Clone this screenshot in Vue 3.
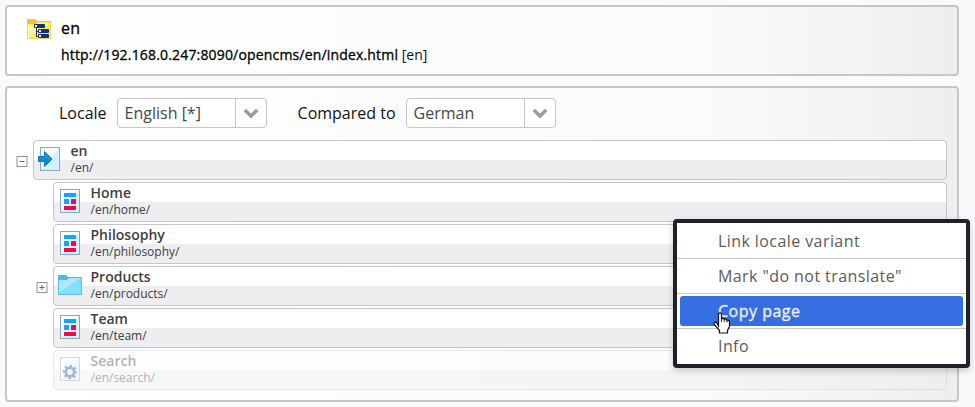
<script setup>
const rows = [
  { title: 'en', path: '/en/', icon: 'redirect', toggle: '-', root: true },
  { title: 'Home', path: '/en/home/', icon: 'page' },
  { title: 'Philosophy', path: '/en/philosophy/', icon: 'page' },
  { title: 'Products', path: '/en/products/', icon: 'folder', toggle: '+' },
  { title: 'Team', path: '/en/team/', icon: 'page' },
  { title: 'Search', path: '/en/search/', icon: 'gear', faded: true },
]
const locales = [
  { label: 'Locale', value: 'English [*]' },
  { label: 'Compared to', value: 'German' },
]
const menu = ['Link locale variant', 'Mark "do not translate"', 'Copy page', 'Info']
const active = 'Copy page'
</script>

<template>
  <main class="view">
    <section class="panel header">
      <svg class="site-icon" width="24" height="20" viewBox="0 0 24 20">
        <path d="M0 0H8L10 2H24V20H0Z" fill="#fbc02d" />
        <path d="M0 5H9L11 3H24V20H0Z" fill="#ffe45c" />
        <path d="M1 6H9L11 4H23L1 19Z" fill="#fff5a0" />
        <path d="M.5 5V19.5H23.5V3" fill="none" stroke="#f9d45c" />
        <path d="M9.500 8V17.500H13M9.500 12.500H13" fill="none" stroke="#0b2f7c" />
        <rect x="7" y="5" width="11" height="4" rx="1" fill="#0b3480" />
        <rect x="11" y="10" width="11" height="4" rx="1" fill="#0b3480" />
        <rect x="11" y="15" width="11" height="4" rx="1" fill="#0b3480" />
        <path d="M8 6h2v2H8zM12 11h2v2h-2zM12 16h2v2h-2z" fill="#fff5a0" />
      </svg>
      <div class="header-text">
        <div class="site-name">en</div>
        <div class="site-url"><span class="url">http://192.168.0.247:8090/opencms/en/index.html</span> <span class="tag">[en]</span></div>
      </div>
    </section>

    <section class="panel tree-panel">
      <div class="filters">
        <div v-for="l in locales" :key="l.label" class="filter">
          <span class="filter-label">{{ l.label }}</span>
          <div class="select">
            <span class="select-value">{{ l.value }}</span>
            <span class="select-button">
              <svg width="16" height="11" viewBox="0 0 16 11"><path d="M1.800 2L8 8L14.200 2" fill="none" stroke="#9c9c9c" stroke-width="3.600" /></svg>
            </span>
          </div>
        </div>
      </div>

      <div class="tree">
        <div v-for="r in rows" :key="r.path" class="row" :class="{ root: r.root, faded: r.faded }">
          <span class="toggle-slot">
            <svg v-if="r.toggle" width="12" height="11" viewBox="0 0 12 11">
              <rect x="1" y=".5" width="10" height="10" fill="#fff" stroke="#a08d85" />
              <path d="M3.500 5.500H8.500" stroke="#666" />
              <path v-if="r.toggle === '+'" d="M6 3V8" stroke="#666" />
            </svg>
          </span>
          <div class="card">
            <svg class="icon" width="24" height="24" viewBox="0 0 24 24">
              <defs>
                <linearGradient id="sheet" x1="0" y1="0" x2="1" y2="1">
                  <stop offset=".45" stop-color="#f4fcff" /><stop offset=".55" stop-color="#d5f1fd" />
                </linearGradient>
                <linearGradient id="arrow" x1="0" y1="0" x2="0" y2="1">
                  <stop offset="0" stop-color="#22a7e8" /><stop offset="1" stop-color="#0876bd" />
                </linearGradient>
              </defs>
              <template v-if="r.icon === 'folder'">
                <path d="M0 2H8L10 4H24V22H0Z" fill="#42bdea" />
                <path d="M1 7H8.500L11 5H23V21H1Z" fill="#83dffa" />
                <path d="M1 7H8.500L11 5H23L1 19Z" fill="#ade9fb" />
                <path d="M.5 7V21.500H23.500V4" fill="none" stroke="#55c5ed" />
              </template>
              <template v-else-if="r.icon === 'redirect'">
                <rect x="2.500" y=".5" width="19" height="23" fill="url(#sheet)" stroke="#86a9bb" />
                <path d="M.5 9.500H6.500V4.500L14 12L6.500 19.500V14.500H.5Z" fill="url(#arrow)" stroke="#087fc4" />
              </template>
              <template v-else>
                <rect x="2.500" y=".5" width="19" height="23" fill="url(#sheet)" stroke="#86a9bb" />
                <template v-if="r.icon === 'page'">
                  <path d="M6 4h12v4H6zM6 10h5v5H6z" fill="#14a5fb" />
                  <path d="M13 10h5v5h-5zM6 17h12v4H6z" fill="#fa0545" />
                </template>
                <template v-else>
                  <circle cx="12" cy="15" r="4.200" fill="none" stroke="#1f4a9c" stroke-width="2.600" />
                  <circle cx="12" cy="15" r="6" fill="none" stroke="#1f4a9c" stroke-width="2.400" stroke-dasharray="2.400 2.312" stroke-dashoffset="1.200" />
                </template>
              </template>
            </svg>
            <div class="card-text">
              <div class="title">{{ r.title }}</div>
              <div class="path">{{ r.path }}</div>
            </div>
          </div>
        </div>
      </div>
    </section>

    <nav class="menu">
      <div v-for="m in menu" :key="m" class="menu-item" :class="{ active: m === active }">
        <span class="menu-label">{{ m }}</span>
      </div>
    </nav>

    <svg class="cursor" width="18" height="22" viewBox="0 0 18 22">
      <path d="M5.500 14V2.500C5.500 .2 8.500 .2 8.500 2.500V7C9.500 6 11 6.200 11.300 7.500C12.400 6.700 13.700 7.100 14 8.500C15.400 7.900 16.500 8.700 16.500 10V14.500L14.500 18.500V21H6.500V18.500L1.300 12.500C.6 10.500 2.600 9.500 3.800 11Z" fill="#fff" stroke="#111" stroke-width="1.200" />
      <path d="M8.500 7V10M11.300 7.500V10M14 8.500V10.500" stroke="#333" fill="none" />
    </svg>
  </main>
</template>

<style>
body { background: #fafafd; overflow: hidden; }
</style>
<style scoped>
.view { position: relative; box-sizing: border-box; height: 407px; padding: 5px 16px 5px 5px; display: flex; flex-direction: column; gap: 10px; font-family: "Open Sans", "Noto Sans", sans-serif; color: #111; white-space: nowrap; }
.panel { box-sizing: border-box; border: 2px solid #c6c6c8; border-radius: 4px; background: linear-gradient(90deg, #fff 0%, #fafafd 75%, #eeeef0 100%); }
.header { height: 71px; display: flex; padding: 12px 20px; }
.header-text { margin: -1px 0 0 10px; }
.site-name { font-size: 16px; line-height: 20px; letter-spacing: .3px; color: #000; -webkit-text-stroke: .3px; }
.site-url { font-size: 14px; line-height: 20px; margin-top: 7px; }
.url { color: #000; letter-spacing: .17px; -webkit-text-stroke: .3px; }
.tree-panel { height: 316px; padding: 10px 10px 0 6px; }
.filters { display: flex; gap: 31px; padding-left: 46px; height: 30px; }
.filter { display: flex; align-items: center; gap: 10px; font-size: 16px; }
.select { box-sizing: border-box; width: 150px; height: 30px; display: flex; border: 1px solid #c5c5c7; border-radius: 4px; background: #fff; color: #474747; }
.select-value { flex: 1; padding-left: 7px; line-height: 28px; }
.select-button { width: 30px; border-left: 1px solid #c5c5c7; display: flex; align-items: center; justify-content: center; }
.tree { display: flex; flex-direction: column; gap: 2px; margin-top: 12px; }
.row { display: flex; height: 40px; padding-left: 20px; }
.root { padding-left: 0; }
.toggle-slot { width: 20px; padding: 16px 0 0 3px; box-sizing: border-box; line-height: 0; }
.card { flex: 1; box-sizing: border-box; display: flex; border: 1px solid #c5c5c7; border-radius: 4px; background: linear-gradient(#fff 50%, #eeeef0 50%); }
.icon { margin: 6px 0 0 4px; }
.card-text { margin-left: 8.5px; color: #404040; }
.title { font-size: 14px; font-weight: 600; line-height: 20px; height: 19px; }
.path { font-size: 12px; line-height: 16px; }
.faded .card { opacity: .4; }
.menu { position: absolute; left: 673px; top: 219px; box-sizing: border-box; width: 297px; height: 149px; border: 4px solid #1d222b; border-radius: 4px; background: #fff; box-shadow: 0 3px 7px rgba(0, 0, 0, .2); color: #5b5b5b; font-size: 16px; }
.menu-item { height: 35px; box-sizing: border-box; padding: 2px 3px; border-bottom: 1px solid #c7c7c9; }
.menu-item:first-child { height: 36px; padding-top: 3px; }
.menu-item:last-child { border: 0; }
.menu-label { display: block; height: 30px; line-height: 30px; padding-left: 38px; letter-spacing: .42px; border-radius: 3px; }
.active .menu-label { background: #346ee0; color: #e6edfb; letter-spacing: .5px; -webkit-text-stroke: .4px; }
.cursor { position: absolute; left: 713px; top: 312px; }
</style>
